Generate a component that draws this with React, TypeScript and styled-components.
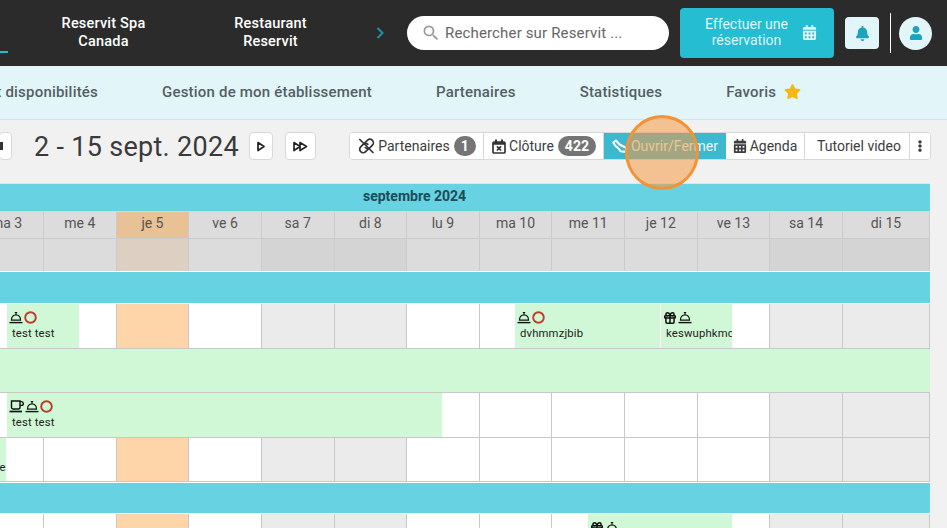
import React from "react";
import styled, { createGlobalStyle } from "styled-components";
import { FaBell, FaCalendarAlt, FaEllipsisV, FaStar, FaUser } from "react-icons/fa";
import { MdSearch } from "react-icons/md";
import { Gift } from "lucide-react";

const Global = createGlobalStyle`
  html, body { margin: 0; padding: 0; width: 947px; height: 528px; overflow: hidden; background: #f1f1f1; }
  * { box-sizing: border-box; }
  body { font-family: Roboto, "Liberation Sans", sans-serif; }
`;

const Page = styled.div`
  position: relative;
  width: 947px;
  height: 528px;
  overflow: hidden;
`;

const TopBar = styled.header`
  height: 66px;
  background: #2b2b2b;
  display: flex;
  align-items: center;
  position: relative;
`;
const ActiveMark = styled.div`
  position: absolute;
  left: 0;
  top: 51px;
  width: 8px;
  height: 2px;
  background: #25b9cf;
`;
const SiteTab = styled.div<{ $w: number }>`
  width: ${(p) => p.$w}px;
  flex: none;
  text-align: center;
  color: #fff;
  font-size: 14.5px;
  font-weight: 500;
  line-height: 18px;
  letter-spacing: 0.2px;
`;
const Chevron = styled.svg`
  flex: none;
  width: 10px;
  height: 14px;
  margin-left: 41px;
`;
const Search = styled.div`
  flex: none;
  margin-left: 22px;
  width: 262px;
  height: 34px;
  background: #fff;
  border-radius: 17px;
  display: flex;
  align-items: center;
  padding-left: 14px;
  gap: 4px;
  color: #666;
  font-size: 15px;
  letter-spacing: 0.15px;
  svg { font-size: 20px; color: #999; flex: none; }
`;
const BookButton = styled.div`
  flex: none;
  margin-left: 11px;
  width: 154px;
  height: 50px;
  background: #24bdd2;
  border-radius: 4px;
  display: flex;
  align-items: center;
  padding: 0 0 2px 25px;
  color: #dff5f8;
  font-size: 14px;
  line-height: 16px;
  text-align: center;
  svg { font-size: 15px; color: #e2f6f9; margin-left: 14px; }
`;
const BellButton = styled.div`
  flex: none;
  margin-left: 11px;
  width: 34px;
  height: 32px;
  border-radius: 4px;
  background: #e2f6f9;
  display: flex;
  align-items: center;
  justify-content: center;
  color: #1ea3bd;
  font-size: 15px;
`;
const Divider = styled.div`
  flex: none;
  margin-left: 11px;
  width: 1px;
  height: 40px;
  background: #fff;
`;
const Avatar = styled.div`
  flex: none;
  margin-left: 8px;
  width: 33px;
  height: 33px;
  border-radius: 50%;
  background: #e2f6f9;
  display: flex;
  align-items: center;
  justify-content: center;
  color: #1ea3bd;
  font-size: 14px;
`;

const SubNav = styled.nav`
  height: 54px;
  background: #e2f6f9;
  border-bottom: 1px solid #c4e9ef;
  display: flex;
  align-items: center;
  gap: 64px;
  padding-bottom: 2px;
  overflow: hidden;
`;
const NavItem = styled.div`
  flex: none;
  color: #555e62;
  font-size: 15px;
  font-weight: 500;
  letter-spacing: 0.2px;
  display: flex;
  align-items: center;
  gap: 8px;
  svg { color: #f6b818; font-size: 17px; }
`;
const NavClip = styled.div`
  flex: none;
  width: 98px;
  display: flex;
  justify-content: flex-end;
  overflow: hidden;
  white-space: nowrap;
`;

const Toolbar = styled.div`
  height: 63px;
  display: flex;
  align-items: flex-start;
  padding-top: 12px;
`;
const PagerButton = styled.div<{ $w: number; $ml: number; $start?: boolean }>`
  flex: none;
  width: ${(p) => p.$w}px;
  height: 28px;
  margin-left: ${(p) => p.$ml}px;
  background: #fff;
  border: 1px solid #d8d8d8;
  border-radius: 4px;
  display: flex;
  align-items: center;
  justify-content: ${(p) => (p.$start ? "flex-start" : "center")};
  overflow: hidden;
  svg { display: block; flex: none; }
`;
const DateTitle = styled.div`
  flex: none;
  margin-left: 22px;
  width: 204px;
  height: 28px;
  line-height: 30px;
  font-size: 27px;
  color: #3a3a3a;
  letter-spacing: 0.3px;
  white-space: nowrap;
`;
const ButtonGroup = styled.div`
  flex: none;
  margin-left: 33px;
  width: 582px;
  height: 28px;
  background: #fff;
  border: 1px solid #d8d8d8;
  border-radius: 4px;
  display: flex;
  overflow: hidden;
`;
const GroupButton = styled.div<{ $w: number; $active?: boolean; $pl?: number }>`
  flex: none;
  width: ${(p) => p.$w}px;
  padding-left: ${(p) => p.$pl ?? 0}px;
  display: flex;
  align-items: center;
  justify-content: center;
  gap: 3px;
  font-size: 14px;
  color: ${(p) => (p.$active ? "#e8f8fb" : "#3d3d3d")};
  background: ${(p) => (p.$active ? "#3cb8d0" : "#fff")};
  border-right: ${(p) => (p.$active ? "none" : "1px solid #d8d8d8")};
  white-space: nowrap;
  svg { flex: none; }
  &:last-child { border-right: none; }
`;
const Count = styled.span`
  display: inline-block;
  min-width: 22px;
  height: 20px;
  line-height: 20px;
  margin-left: 1px;
  padding: 0 7px;
  border-radius: 10px;
  background: #757575;
  color: #fff;
  font-size: 14px;
  font-weight: 700;
  text-align: center;
`;

const Calendar = styled.div`
  width: 930px;
  overflow: hidden;
  border-top: 1px solid #e4e4e4;
`;
const MonthBar = styled.div`
  height: 28px;
  background: #67d2e2;
  text-align: center;
  color: #1d4b58;
  font-size: 14px;
  font-weight: 700;
  line-height: 24px;
  border-bottom: 1px solid #c5dde2;
  padding-right: 101px;
`;
const Band = styled.div<{ $h: number }>`
  height: ${(p) => p.$h}px;
  background: #67d2e2;
  border-top: 1px solid #fff;
  border-bottom: 1px solid #fff;
`;
const Grid = styled.div<{ $h: number }>`
  position: relative;
  height: ${(p) => p.$h}px;
  display: grid;
  grid-template-columns: 44px repeat(11, 72.64px) 1fr;
`;
type Kind = "plain" | "today" | "weekend";
const HeadCell = styled.div<{ $kind: Kind; $first?: boolean }>`
  margin-left: ${(p) => (p.$first ? "-30px" : "0")};
  background: ${(p) => (p.$kind === "today" ? "#e8c194" : "#dcdcdc")};
  border-right: 1px solid #cbcbcb;
  border-bottom: 1px solid #cbcbcb;
  text-align: center;
  font-size: 14px;
  line-height: 23px;
  color: #555;
`;
const BlankHeadCell = styled.div<{ $kind: Kind }>`
  background: ${(p) =>
    p.$kind === "today" ? "#ddd0c3" : p.$kind === "weekend" ? "#d4d4d4" : "#dcdcdc"};
  border-right: 1px solid #cbcbcb;
`;
const Cell = styled.div<{ $kind: Kind }>`
  background: ${(p) =>
    p.$kind === "today" ? "#fdd5a9" : p.$kind === "weekend" ? "#ebebeb" : "#fff"};
  border-right: 1px solid #c8c8c8;
  border-bottom: 1px solid #c8c8c8;
`;
const FullGreen = styled.div`
  height: 44px;
  background: #d0f8d6;
  border-bottom: 1px solid #c8c8c8;
`;
const EventBar = styled.div<{ $l: number; $w: number }>`
  position: absolute;
  top: 0;
  bottom: 1px;
  left: ${(p) => p.$l}px;
  width: ${(p) => p.$w}px;
  background: #d0f8d6;
  overflow: hidden;
  padding: 7px 0 0 2px;
  color: #222;
`;
const IconRow = styled.div`
  display: flex;
  align-items: center;
  gap: 1px;
  height: 13px;
  svg { display: block; flex: none; }
`;
const EventName = styled.div`
  margin: 3px 0 0 3px;
  font-size: 11.3px;
  line-height: 14px;
  letter-spacing: 0.15px;
  white-space: nowrap;
`;
const Spot = styled.div`
  position: absolute;
  left: 625px;
  top: 115px;
  width: 74px;
  height: 75px;
  border-radius: 50%;
  border: 3px solid #f39236;
  background: rgba(246, 153, 68, 0.55);
`;

const BellIcon = () => (
  <svg width="14" height="13" viewBox="0 0 14 13" fill="none" stroke="#111" strokeWidth="1.2">
    <path d="M2.5 9.2C2.5 6 4.5 4 7 4S11.5 6 11.5 9.2Z" />
    <path d="M7 1.5V4M5.8 1.5H8.2" />
    <path d="M0.5 11.6H13.5" strokeWidth="1.4" />
  </svg>
);
const NoIcon = () => (
  <svg width="13" height="13" viewBox="0 0 13 13" fill="none" stroke="#c23a2c" strokeWidth="1.9">
    <circle cx="6.5" cy="6.5" r="5.3" />
  </svg>
);
const CupIcon = () => (
  <svg width="15" height="13" viewBox="0 0 15 13" fill="none" stroke="#111" strokeWidth="1.4">
    <path d="M2.5 1H11V7.2C11 8.4 10.2 9 9.2 9H4.3C3.2 9 2.5 8.4 2.5 7.2Z" />
    <path d="M11 1.6H12.6C13.6 1.6 14.3 2.3 14.3 3.4S13.6 5.4 12.6 5.4H11" />
    <path d="M0.5 11.5H13" strokeWidth="1.7" />
  </svg>
);
const GiftIcon = () => <Gift size={14} color="#111" strokeWidth={2.6} />;
const KeyIcon = () => (
  <svg width="16" height="15" viewBox="0 0 16 15" fill="none" stroke="#fff" strokeWidth="2" strokeLinejoin="round">
    <path d="M1.2 3.5L4 1.5L7.5 5.5L13.5 8.5C15 9.5 14.5 12.8 12.5 12.8L8.5 12.2L6.5 9.5L3.5 7Z" />
  </svg>
);
const LinkOffIcon = () => (
  <svg width="17" height="16" viewBox="0 0 17 16" fill="none" stroke="#333" strokeWidth="1.7" strokeLinecap="round">
    <path d="M7 4.6L9.4 2.3C10.8 1 13 1 14.4 2.3C15.7 3.7 15.7 5.9 14.4 7.2L12 9.6C10.7 10.9 8.6 10.9 7.4 9.7" />
    <path d="M9.8 6.4C8.5 5.1 6.4 5.1 5.1 6.4L2.7 8.8C1.4 10.1 1.4 12.3 2.7 13.7C4.1 15 6.3 15 7.6 13.7L10 11.3" />
    <path d="M1.8 1.5L15 14.5" />
  </svg>
);
const CloseDayIcon = () => (
  <svg width="14" height="15" viewBox="0 0 14 15" fill="none" stroke="#333" strokeWidth="1.7">
    <rect x="1" y="3" width="12" height="11" rx="1" />
    <path d="M1 4.3H13" strokeWidth="2.8" />
    <path d="M4 0.5V3M10 0.5V3" strokeWidth="2" />
    <path d="M4.9 7.3L9.1 11.5M9.1 7.3L4.9 11.5" />
  </svg>
);
const Play = () => (
  <svg width="10" height="11" viewBox="0 0 10 11" fill="none" stroke="#222" strokeWidth="1.7" strokeLinejoin="round">
    <path d="M2 1.5L8 5.5L2 9.5Z" />
  </svg>
);
const BackTip = () => (
  <svg width="3" height="8" viewBox="0 0 3 8" fill="#333">
    <rect width="3" height="8" />
  </svg>
);
const FastForward = () => (
  <svg width="17" height="11" viewBox="0 0 17 11" fill="none" stroke="#222" strokeWidth="1.7" strokeLinejoin="round">
    <path d="M2 1.5L8 5.5L2 9.5Z" />
    <path d="M8 1.5L14.5 5.5L8 9.5Z" />
  </svg>
);

const days: { label: string; kind: Kind }[] = [
  { label: "ma 3", kind: "plain" },
  { label: "me 4", kind: "plain" },
  { label: "je 5", kind: "today" },
  { label: "ve 6", kind: "plain" },
  { label: "sa 7", kind: "weekend" },
  { label: "di 8", kind: "weekend" },
  { label: "lu 9", kind: "plain" },
  { label: "ma 10", kind: "plain" },
  { label: "me 11", kind: "plain" },
  { label: "je 12", kind: "plain" },
  { label: "ve 13", kind: "plain" },
  { label: "sa 14", kind: "weekend" },
  { label: "di 15", kind: "weekend" },
];

const Cells = () => (
  <>
    {days.map((d) => (
      <Cell key={d.label} $kind={d.kind} />
    ))}
  </>
);

export default function App() {
  return (
    <Page>
      <Global />
      <TopBar>
        <ActiveMark />
        <SiteTab $w={207}>
          Reservit Spa
          <br />
          Canada
        </SiteTab>
        <SiteTab $w={127}>
          Restaurant
          <br />
          Reservit
        </SiteTab>
        <Chevron viewBox="0 0 10 14" fill="none" stroke="#1c93aa" strokeWidth="2">
          <path d="M2.5 2L7.5 7L2.5 12" />
        </Chevron>
        <Search>
          <MdSearch />
          Rechercher sur Reservit ...
        </Search>
        <BookButton>
          <span>
            Effectuer une
            <br />
            réservation
          </span>
          <FaCalendarAlt />
        </BookButton>
        <BellButton>
          <FaBell />
        </BellButton>
        <Divider />
        <Avatar>
          <FaUser />
        </Avatar>
      </TopBar>
      <SubNav>
        <NavClip>
          <NavItem>Tarifs et disponibilités</NavItem>
        </NavClip>
        <NavItem>Gestion de mon établissement</NavItem>
        <NavItem>Partenaires</NavItem>
        <NavItem>Statistiques</NavItem>
        <NavItem>
          Favoris
          <FaStar />
        </NavItem>
      </SubNav>
      <Toolbar>
        <PagerButton $w={13} $ml={-1} $start>
          <BackTip />
        </PagerButton>
        <DateTitle>2 - 15 sept. 2024</DateTitle>
        <PagerButton $w={24} $ml={11}>
          <Play />
        </PagerButton>
        <PagerButton $w={31} $ml={12}>
          <FastForward />
        </PagerButton>
        <ButtonGroup>
          <GroupButton $w={134} $pl={1}>
            <LinkOffIcon />
            Partenaires
            <Count>1</Count>
          </GroupButton>
          <GroupButton $w={120} $pl={1}>
            <CloseDayIcon />
            Clôture
            <Count>422</Count>
          </GroupButton>
          <GroupButton $w={122} $active>
            <KeyIcon />
            Ouvrir/Fermer
          </GroupButton>
          <GroupButton $w={79}>
            <FaCalendarAlt size={14} />
            Agenda
          </GroupButton>
          <GroupButton $w={105} $pl={4}>
            Tutoriel video
          </GroupButton>
          <GroupButton $w={20}>
            <FaEllipsisV size={12} />
          </GroupButton>
        </ButtonGroup>
      </Toolbar>
      <Calendar>
        <MonthBar>septembre 2024</MonthBar>
        <Grid $h={27}>
          {days.map((d, i) => (
            <HeadCell key={d.label} $kind={d.kind} $first={i === 0}>
              {d.label}
            </HeadCell>
          ))}
        </Grid>
        <Grid $h={32}>
          {days.map((d) => (
            <BlankHeadCell key={d.label} $kind={d.kind} />
          ))}
        </Grid>
        <Band $h={33} />
        <Grid $h={45}>
          <Cells />
          <EventBar $l={7} $w={72}>
            <IconRow>
              <BellIcon />
              <NoIcon />
            </IconRow>
            <EventName>test test</EventName>
          </EventBar>
          <EventBar $l={515} $w={145}>
            <IconRow>
              <BellIcon />
              <NoIcon />
            </IconRow>
            <EventName>dvhmmzjbib</EventName>
          </EventBar>
          <EventBar $l={661} $w={71}>
            <IconRow>
              <GiftIcon />
              <BellIcon />
            </IconRow>
            <EventName>keswuphkmdq</EventName>
          </EventBar>
        </Grid>
        <FullGreen />
        <Grid $h={45}>
          <Cells />
          <EventBar $l={7} $w={435}>
            <IconRow>
              <CupIcon />
              <BellIcon />
              <NoIcon />
            </IconRow>
            <EventName>test test</EventName>
          </EventBar>
        </Grid>
        <Grid $h={44}>
          <Cells />
          <EventBar $l={-45} $w={51}>
            <IconRow />
            <EventName>test date</EventName>
          </EventBar>
        </Grid>
        <Band $h={32} />
        <Grid $h={45}>
          <Cells />
          <EventBar $l={588} $w={144}>
            <IconRow>
              <GiftIcon />
              <BellIcon />
            </IconRow>
          </EventBar>
        </Grid>
      </Calendar>
      <Spot />
    </Page>
  );
}
